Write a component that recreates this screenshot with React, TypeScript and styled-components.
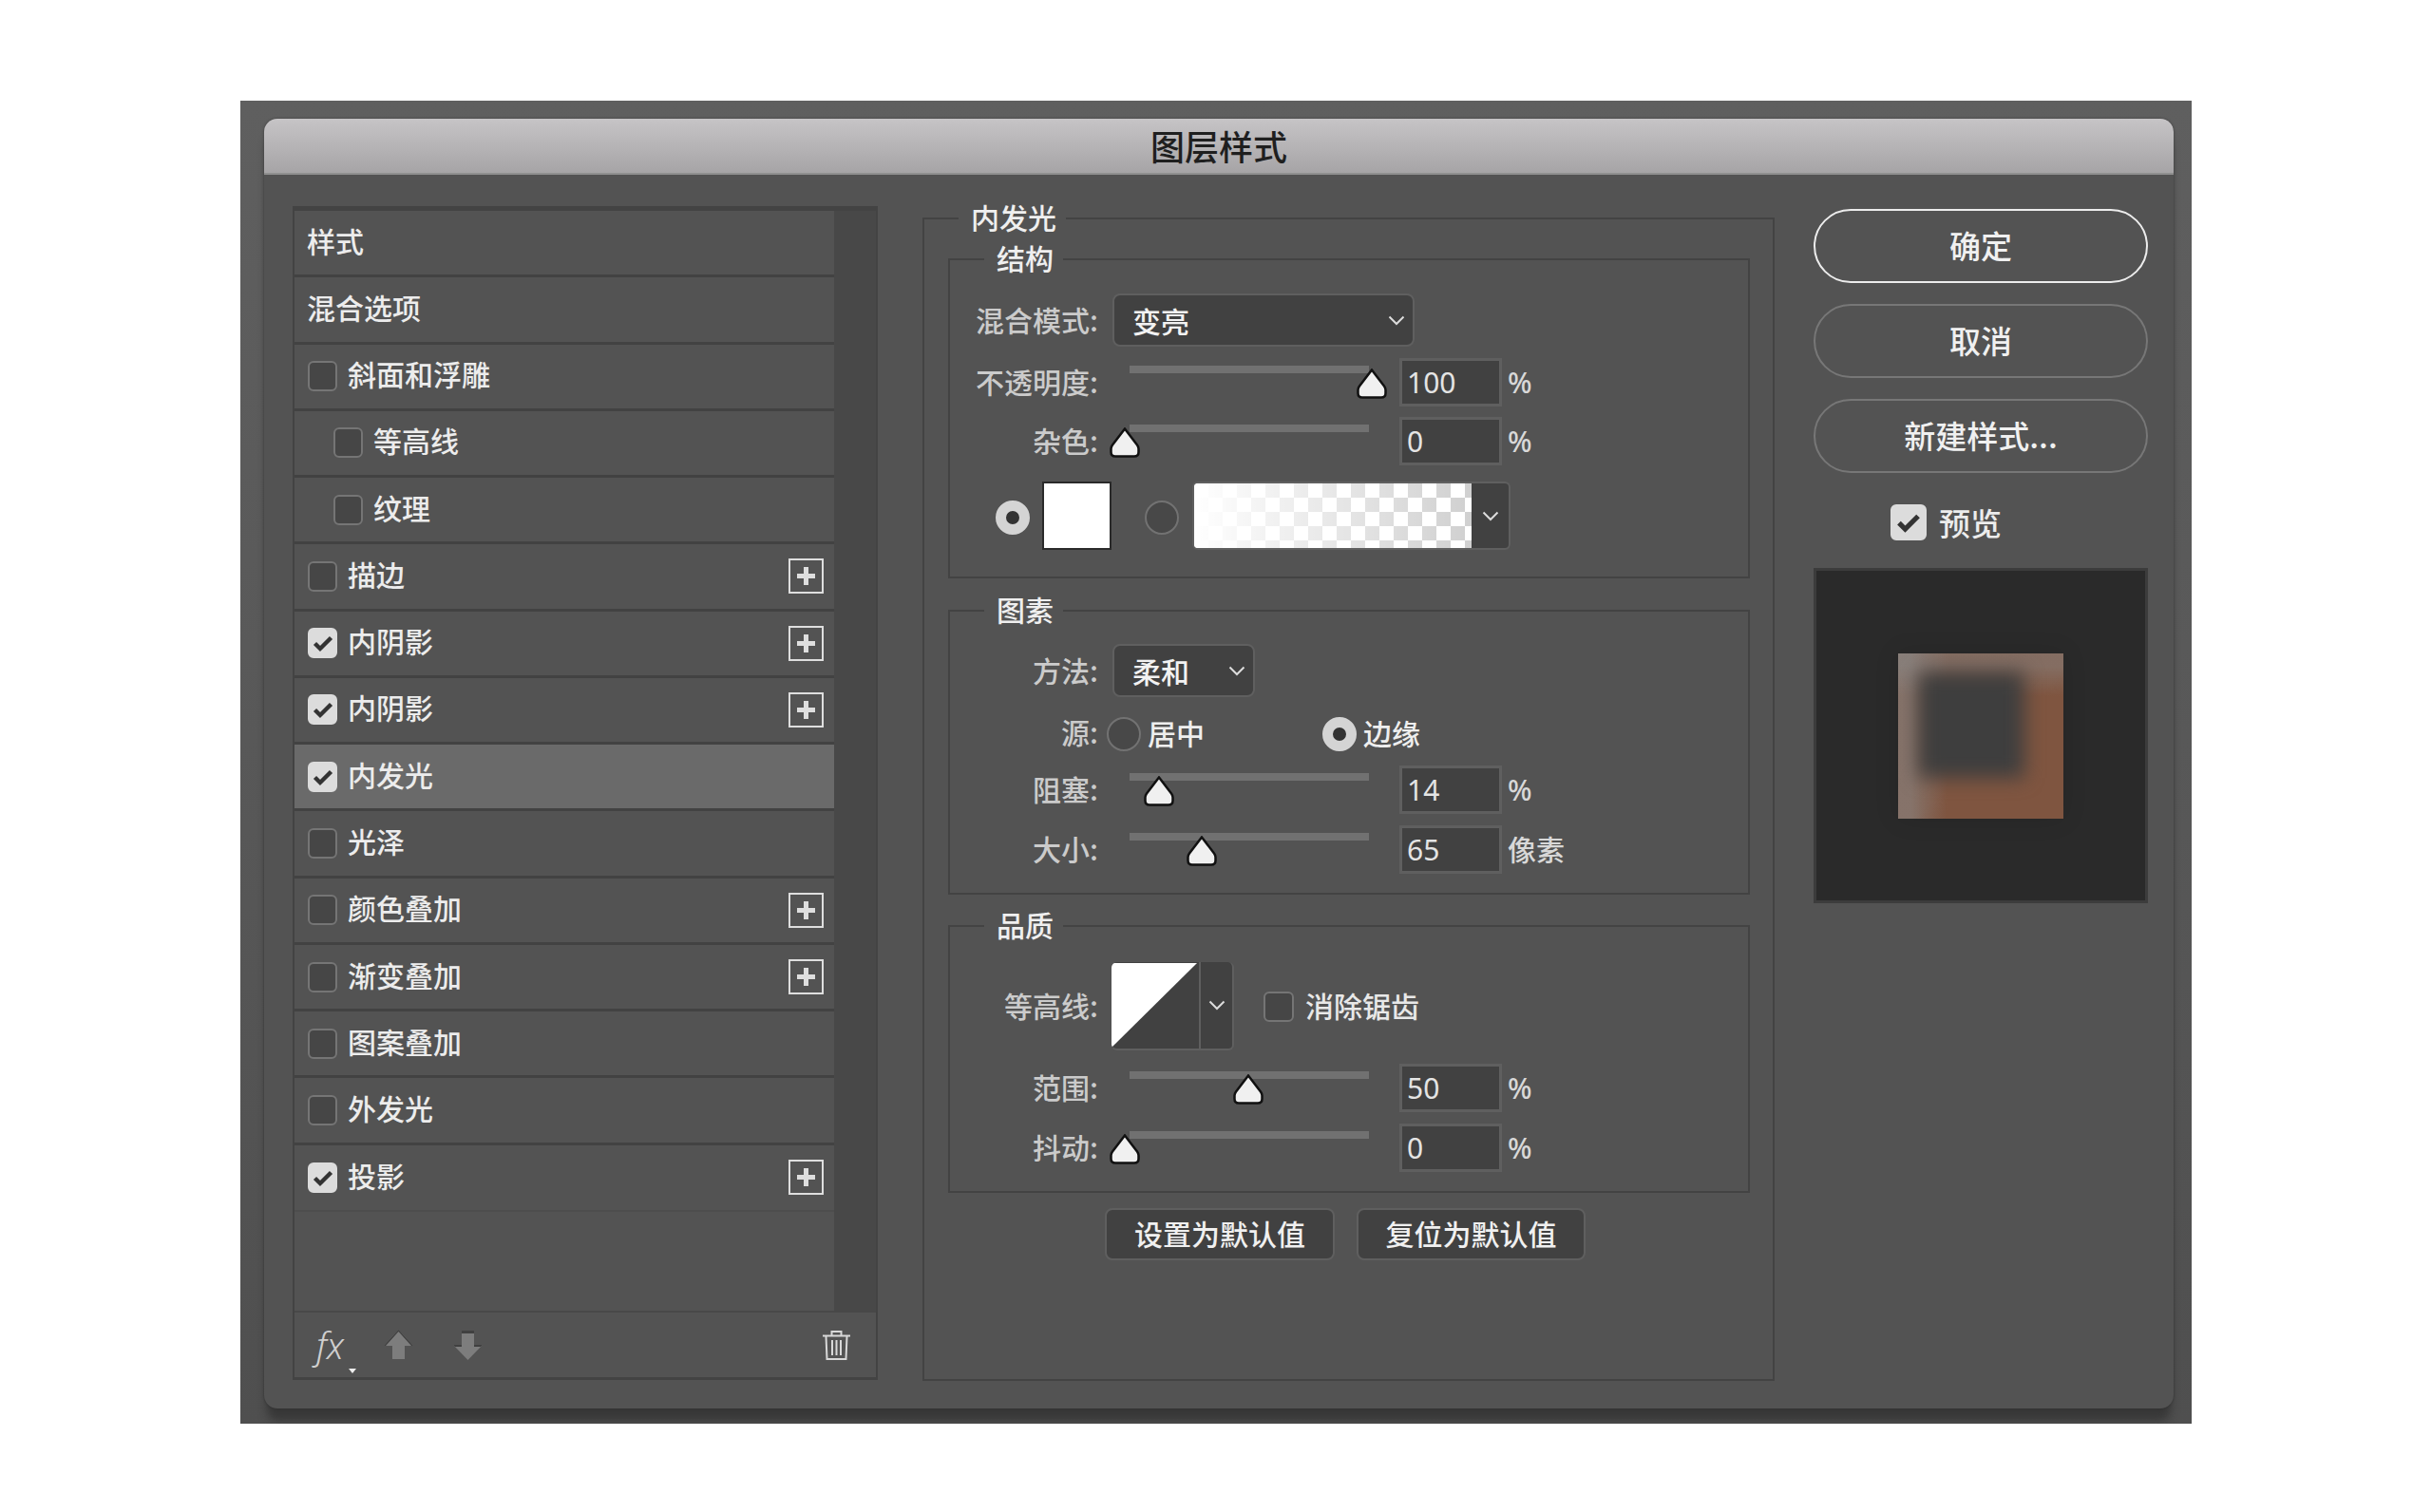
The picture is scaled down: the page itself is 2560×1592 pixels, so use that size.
import styled, { createGlobalStyle } from 'styled-components';

const GlobalStyle = createGlobalStyle`
  html, body {
    margin: 0;
    background: #fff;
  }
  * {
    box-sizing: border-box;
  }
  body {
    font-family: "Noto Sans CJK SC", "Noto Sans", sans-serif;
  }
`;

const Page = styled.div`
  width: 2560px;
  height: 1592px;
  padding: 106px 0 0 253px;
`;

const Frame = styled.div`
  width: 2054px;
  height: 1393px;
  padding: 19px 19px 16px 25px;
  background: linear-gradient(#5f5f5f 0, #575757 55%, #4f4f4f 100%);
  overflow: hidden;
`;

const Window = styled.div`
  width: 2010px;
  height: 1358px;
  border-radius: 14px;
  background: #535353;
  box-shadow: 0 16px 10px -3px rgba(40, 40, 40, 0.6), 0 0 3px rgba(0, 0, 0, 0.35);
  overflow: hidden;
`;

const TitleBar = styled.div`
  height: 59px;
  display: flex;
  align-items: center;
  justify-content: center;
  padding-bottom: 2px;
  background: linear-gradient(#c6c4c6, #a6a4a6);
  border-bottom: 2px solid #8f8f8f;
  color: #1f1f1f;
  font-size: 36px;
  font-weight: 500;
`;

const Body = styled.div`
  display: flex;
  padding: 33px 0 0 30px;
  align-items: flex-start;
`;

const StylePanel = styled.div`
  width: 616px;
  height: 1236px;
  margin-right: 47px;
  display: flex;
  flex-direction: column;
  border: 2px solid #434343;
  border-top-width: 5px;
  border-bottom-width: 3px;
`;

const ListArea = styled.div`
  display: flex;
  height: 1160px;
  border-bottom: 2px solid #484848;
`;

const StyleList = styled.div`
  width: 568px;
`;

const Scrollbar = styled.div`
  width: 44px;
  background: #484848;
`;

const StyleRow = styled.div<{ $selected?: boolean; $last?: boolean; $indent?: boolean }>`
  height: 70.27px;
  display: flex;
  align-items: center;
  padding: 0 11px 0 ${(p) => (p.$indent ? '41px' : '14px')};
  background: ${(p) => (p.$selected ? '#6a6a6a' : 'transparent')};
  border-bottom: ${(p) => (p.$last ? '2px solid #4d4d4d' : '3px solid #424242')};
  color: #ececec;
  font-size: 30px;
  font-weight: 500;
`;

const RowName = styled.span<{ $boxed?: boolean }>`
  flex: 1;
  margin: -6px 0 0 ${(p) => (p.$boxed ? -2 : -1)}px;
`;

const Box = styled.span<{ $checked?: boolean; $size?: number }>`
  flex: none;
  width: ${(p) => p.$size ?? 31}px;
  height: ${(p) => p.$size ?? 32}px;
  margin-right: 13px;
  display: flex;
  align-items: center;
  justify-content: center;
  border-radius: 6px;
  background: ${(p) => (p.$checked ? '#dcdcdc' : '#464646')};
  border: 2px solid ${(p) => (p.$checked ? '#dcdcdc' : '#757575')};
`;

const PlusBox = styled.span`
  flex: none;
  width: 37px;
  height: 37px;
  display: flex;
  align-items: center;
  justify-content: center;
  border: 2px solid #dedede;
`;

const PanelFooter = styled.div`
  flex: 1;
  display: flex;
  align-items: center;
  position: relative;
  padding: 0 26px 0 23px;
  color: #cfcfcf;
`;

const FxLabel = styled.span`
  width: 30px;
  margin-right: 41px;
  font-family: "Noto Sans", sans-serif;
  font-size: 38px;
  font-style: italic;
  font-weight: 300;
  line-height: 40px;
`;

const FxCaret = styled.span`
  position: absolute;
  left: 57px;
  top: 59px;
  border-left: 4px solid transparent;
  border-right: 4px solid transparent;
  border-top: 5px solid #eee;
`;

const FooterIcon = styled.span<{ $gap?: number }>`
  display: flex;
  margin-left: ${(p) => p.$gap ?? 0}px;
`;

const Spacer = styled.span`
  flex: 1;
`;

const MainColumn = styled.div`
  width: 897px;
  height: 1225px;
  margin: 12px 41px 0 0;
  position: relative;
  padding: 41px 24px 0 25px;
  border: 2px solid #434343;
`;

const Group = styled.div<{ $height: number; $top: number; $pad: number }>`
  position: relative;
  height: ${(p) => p.$height}px;
  margin-bottom: ${(p) => p.$top}px;
  padding-top: ${(p) => p.$pad}px;
  border: 2px solid #434343;
`;

const Legend = styled.span`
  position: absolute;
  left: 36px;
  top: -23px;
  padding: 0 10px 0 13px;
  background: #535353;
  color: #efefef;
  font-size: 30px;
  font-weight: 500;
  line-height: 40px;
`;

const FieldRow = styled.div<{ $height: number; $gap?: number }>`
  display: flex;
  align-items: center;
  height: ${(p) => p.$height}px;
  margin-bottom: ${(p) => p.$gap ?? 0}px;
`;

const FieldLabel = styled.span`
  flex: none;
  width: 155px;
  margin-top: -3px;
  padding-right: 0;
  text-align: right;
  color: #cbcbcb;
  font-size: 30px;
  font-weight: 500;
  white-space: nowrap;
  transform: translateX(1px);
`;

const Select = styled.div<{ $width: number }>`
  width: ${(p) => p.$width}px;
  height: 100%;
  margin-left: 16px;
  padding: 0 8px 0 19px;
  display: flex;
  align-items: center;
  justify-content: space-between;
  background: #414141;
  border: 2px solid #5f5f5f;
  border-radius: 8px;
  color: #f2f2f2;
  font-size: 30px;
  font-weight: 500;
`;

const SliderField = styled.div`
  position: relative;
  align-self: flex-start;
  width: 252px;
  height: 8px;
  margin: 8px 32px 0 34px;
  background: #717171;
`;

const Thumb = styled.svg<{ $pos: number }>`
  position: absolute;
  top: 3px;
  left: ${(p) => -21 + p.$pos * 2.6}px;
`;

const NumberInput = styled.span`
  flex: none;
  width: 108px;
  height: 100%;
  padding-left: 5px;
  display: flex;
  align-items: center;
  background: #414141;
  border: 3px solid #5f5f5f;
  color: #e4e4e4;
  font-family: "Noto Sans", sans-serif;
  font-size: 30px;
`;

const Unit = styled.span<{ $cjk?: boolean }>`
  margin-left: 6px;
  margin-top: ${(p) => (p.$cjk ? -3 : 0)}px;
  color: #d8d8d8;
  font-family: ${(p) => (p.$cjk ? '"Noto Sans CJK SC"' : '"Noto Sans"')}, sans-serif;
  font-size: 30px;
  font-weight: 500;
`;

const Radio = styled.span<{ $on?: boolean }>`
  flex: none;
  width: 36px;
  height: 36px;
  border-radius: 50%;
  background: ${(p) => (p.$on ? '#333' : '#484848')};
  border: ${(p) => (p.$on ? '11px solid #d4d4d4' : '2px solid #727272')};
`;

const ColorRow = styled.div`
  display: flex;
  align-items: center;
  height: 72px;
  padding-left: 48px;

  ${Radio} {
    margin-top: 3px;
  }
`;

const ColorSwatch = styled.span`
  width: 73px;
  height: 72px;
  margin: 0 35px 0 13px;
  background: #fff;
  border: 2px solid #2a2a2a;
`;

const GlowPicker = styled.span`
  width: 335px;
  height: 72px;
  margin-left: 14px;
  display: flex;
  background: #414141;
  border: 2px solid #5f5f5f;
  border-radius: 6px;
  overflow: hidden;
`;

const GlowGradient = styled.span`
  width: 292px;
  background: linear-gradient(90deg, #fff 0, rgba(255, 255, 255, 0) 100%),
    repeating-conic-gradient(#d0d0d0 0 25%, #fff 0 50%) 0 0 / 30px 30px;
`;

const PickerArrow = styled.span`
  flex: 1;
  display: flex;
  align-items: center;
  justify-content: center;
`;

const SourceOption = styled.span<{ $width: number; $first?: boolean }>`
  display: flex;
  align-items: center;
  width: ${(p) => p.$width}px;
  margin-left: ${(p) => (p.$first ? 10 : 0)}px;
  color: #eee;
  font-size: 30px;
  font-weight: 500;
  line-height: 36px;

  ${Radio} {
    margin-right: 7px;
    margin-top: 3px;
  }
`;

const ContourPicker = styled.span`
  width: 129px;
  height: 100%;
  margin: 0 31px 0 15px;
  display: flex;
  background: #414141;
  border: 2px solid #5f5f5f;
  border-left: none;
  border-top: none;
  border-radius: 6px;
  overflow: hidden;
`;

const ContourGraph = styled.svg`
  flex: none;
  border-right: 2px solid #5f5f5f;
`;

const CheckText = styled.span`
  margin: -3px 0 0 -1px;
  color: #e8e8e8;
  font-size: 30px;
  font-weight: 500;
`;

const DefaultActions = styled.div`
  display: flex;
  gap: 23px;
  padding-left: 165px;
`;

const DefaultButton = styled.button<{ $width: number }>`
  width: ${(p) => p.$width}px;
  height: 55px;
  padding: 0 0 3px;
  background: #414141;
  border: 2px solid #5f5f5f;
  border-radius: 8px;
  color: #f0f0f0;
  font-family: inherit;
  font-size: 30px;
  font-weight: 500;
`;

const SideColumn = styled.div`
  width: 352px;
  margin-top: 3px;
`;

const PillButton = styled.button<{ $primary?: boolean }>`
  display: block;
  width: 100%;
  height: 78px;
  margin-bottom: 22px;
  padding: 0 0 3px;
  background: transparent;
  border: 2px solid ${(p) => (p.$primary ? '#ececec' : '#777')};
  border-radius: 39px;
  color: #f0f0f0;
  font-family: inherit;
  font-size: 33px;
  font-weight: 500;
`;

const PreviewToggle = styled.div`
  display: flex;
  align-items: center;
  height: 38px;
  margin: 33px 0 29px;
  padding-left: 81px;
  color: #ececec;
  font-size: 33px;
  font-weight: 500;
  line-height: 34px;
`;

const PreviewPane = styled.div`
  height: 353px;
  display: flex;
  align-items: center;
  justify-content: center;
  background: #2a2a2a;
  border: 3px solid #3c3c3c;
`;

const PreviewSwatch = styled.div`
  position: relative;
  width: 174px;
  height: 174px;
  overflow: hidden;
  background: #7f5540;
  box-shadow: 0 0 24px rgba(0, 0, 0, 0.12);

  &::before {
    content: '';
    position: absolute;
    inset: 0;
    background: linear-gradient(90deg, rgba(140, 140, 140, 0.55) 8%, rgba(140, 140, 140, 0) 30%),
      linear-gradient(rgba(140, 140, 140, 0.45) 8%, rgba(140, 140, 140, 0) 26%);
    mask-image: linear-gradient(135deg, #000 55%, transparent 85%);
  }
`;

const PreviewCore = styled.div`
  position: absolute;
  left: 21px;
  top: 19px;
  width: 112px;
  height: 112px;
  background: #3e3e3e;
  filter: blur(10px);
`;

const CheckMark = ({ size = 22 }: { size?: number }) => (
  <svg width={size} height={size} viewBox="0 0 22 22">
    <path d="M2.500 11.500l5.500 5.500L19.500 5.500" fill="none" stroke="#333" strokeWidth="4.400" />
  </svg>
);

const PlusMark = () => (
  <svg width="23" height="23" viewBox="0 0 23 23">
    <path d="M11.500 2v19M2 11.500h19" stroke="#dedede" strokeWidth="5" />
  </svg>
);

const Chevron = () => (
  <svg width="18" height="11" viewBox="0 0 18 11">
    <path d="M1.500 1.500L9 9l7.500-7.500" fill="none" stroke="#dcdcdc" strokeWidth="2" />
  </svg>
);

const SliderThumb = ({ pos }: { pos: number }) => (
  <Thumb $pos={pos} width="32" height="32" viewBox="0 0 32 32">
    <path
      d="M16 1.500L29 18.500c1.200 1.600 1.500 2.600 1.500 4V26c0 2.500-1.500 4.500-4.500 4.500H6C3 30.500 1.500 28.500 1.500 26v-3.500c0-1.400.3-2.400 1.500-4z"
      fill="#f0f0f0"
      stroke="#111"
      strokeWidth="2.500"
    />
  </Thumb>
);

const ArrowUp = () => (
  <svg width="31" height="32" viewBox="0 0 31 32">
    <path d="M15.500 0L31 17H22V31H9V17H0z" fill="#7d7d7d" />
    <path d="M15.500 0L0 17h2L15.500 2 29 17h2z" fill="#404040" />
  </svg>
);

const ArrowDown = () => (
  <svg width="31" height="32" viewBox="0 0 31 32">
    <path d="M9 1H22V16H31L15.500 32 0 16H9z" fill="#7d7d7d" />
    <path d="M9 1H22V4H9zM0 16H9v2H2z M22 16h9l-2 2H22z" fill="#404040" />
  </svg>
);

const TrashIcon = () => (
  <svg width="31" height="32" viewBox="0 0 31 32" fill="none" stroke="#d8d8d8" strokeWidth="2">
    <path d="M1 6.500h29M10.500 6V2h10v4M4.500 7l1 24h20l1-24M11 11v16M15.500 11v16M20 11v16" />
  </svg>
);

type RowItem = {
  name: string;
  box?: boolean;
  checked?: boolean;
  indent?: boolean;
  plus?: boolean;
  selected?: boolean;
};

const ROWS: RowItem[] = [
  { name: '样式' },
  { name: '混合选项' },
  { name: '斜面和浮雕', box: true },
  { name: '等高线', box: true, indent: true },
  { name: '纹理', box: true, indent: true },
  { name: '描边', box: true, plus: true },
  { name: '内阴影', box: true, checked: true, plus: true },
  { name: '内阴影', box: true, checked: true, plus: true },
  { name: '内发光', box: true, checked: true, selected: true },
  { name: '光泽', box: true },
  { name: '颜色叠加', box: true, plus: true },
  { name: '渐变叠加', box: true, plus: true },
  { name: '图案叠加', box: true },
  { name: '外发光', box: true },
  { name: '投影', box: true, checked: true, plus: true },
];

const SliderRow = ({
  label,
  value,
  pos,
  unit = '%',
  height = 51,
  gap,
}: {
  label: string;
  value: string;
  pos: number;
  unit?: string;
  height?: number;
  gap?: number;
}) => (
  <FieldRow $height={height} $gap={gap}>
    <FieldLabel>{label}</FieldLabel>
    <SliderField>
      <SliderThumb pos={pos} />
    </SliderField>
    <NumberInput>{value}</NumberInput>
    <Unit $cjk={unit !== '%'}>{unit}</Unit>
  </FieldRow>
);

const App = () => {
  return (
    <Page>
      <GlobalStyle />
      <Frame>
        <Window>
          <TitleBar>图层样式</TitleBar>
          <Body>
            <StylePanel>
              <ListArea>
                <StyleList>
                  {ROWS.map((row, i) => (
                    <StyleRow
                      key={i}
                      $selected={row.selected}
                      $indent={row.indent}
                      $last={i === ROWS.length - 1}
                    >
                      {row.box && <Box $checked={row.checked}>{row.checked && <CheckMark />}</Box>}
                      <RowName $boxed={row.box}>{row.name}</RowName>
                      {row.plus && (
                        <PlusBox>
                          <PlusMark />
                        </PlusBox>
                      )}
                    </StyleRow>
                  ))}
                </StyleList>
                <Scrollbar />
              </ListArea>
              <PanelFooter>
                <FxLabel>fx</FxLabel>
                <FxCaret />
                <FooterIcon $gap={0}>
                  <ArrowUp />
                </FooterIcon>
                <FooterIcon $gap={42}>
                  <ArrowDown />
                </FooterIcon>
                <Spacer />
                <TrashIcon />
              </PanelFooter>
            </StylePanel>

            <MainColumn>
              <Legend>内发光</Legend>
              <Group $height={337} $top={33} $pad={35}>
                <Legend>结构</Legend>
                <FieldRow $height={56} $gap={12}>
                  <FieldLabel>混合模式:</FieldLabel>
                  <Select $width={318}>
                    变亮
                    <Chevron />
                  </Select>
                </FieldRow>
                <SliderRow label="不透明度:" value="100" pos={100} gap={11} />
                <SliderRow label="杂色:" value="0" pos={0} gap={17} />
                <ColorRow>
                  <Radio $on />
                  <ColorSwatch />
                  <Radio />
                  <GlowPicker>
                    <GlowGradient />
                    <PickerArrow>
                      <Chevron />
                    </PickerArrow>
                  </GlowPicker>
                </ColorRow>
              </Group>

              <Group $height={300} $top={32} $pad={34}>
                <Legend>图素</Legend>
                <FieldRow $height={56} $gap={19}>
                  <FieldLabel>方法:</FieldLabel>
                  <Select $width={150}>
                    柔和
                    <Chevron />
                  </Select>
                </FieldRow>
                <FieldRow $height={36} $gap={17}>
                  <FieldLabel>源:</FieldLabel>
                  <SourceOption $width={227} $first>
                    <Radio />
                    居中
                  </SourceOption>
                  <SourceOption $width={120}>
                    <Radio $on />
                    边缘
                  </SourceOption>
                </FieldRow>
                <SliderRow label="阻塞:" value="14" pos={14} gap={12} />
                <SliderRow label="大小:" value="65" pos={31} unit="像素" />
              </Group>

              <Group $height={282} $top={16} $pad={37}>
                <Legend>品质</Legend>
                <FieldRow $height={93} $gap={14}>
                  <FieldLabel>等高线:</FieldLabel>
                  <ContourPicker>
                    <ContourGraph width="94" height="91" viewBox="0 0 94 91">
                      <path d="M0 0H92L0 91z" fill="#fff" />
                    </ContourGraph>
                    <PickerArrow>
                      <Chevron />
                    </PickerArrow>
                  </ContourPicker>
                  <Box $size={32}></Box>
                  <CheckText>消除锯齿</CheckText>
                </FieldRow>
                <SliderRow label="范围:" value="50" pos={50} gap={12} />
                <SliderRow label="抖动:" value="0" pos={0} />
              </Group>

              <DefaultActions>
                <DefaultButton $width={242}>设置为默认值</DefaultButton>
                <DefaultButton $width={241}>复位为默认值</DefaultButton>
              </DefaultActions>
            </MainColumn>

            <SideColumn>
              <PillButton $primary>确定</PillButton>
              <PillButton>取消</PillButton>
              <PillButton>新建样式...</PillButton>
              <PreviewToggle>
                <Box $checked $size={38}>
                  <CheckMark size={26} />
                </Box>
                预览
              </PreviewToggle>
              <PreviewPane>
                <PreviewSwatch>
                  <PreviewCore />
                </PreviewSwatch>
              </PreviewPane>
            </SideColumn>
          </Body>
        </Window>
      </Frame>
    </Page>
  );
};

export default App;
